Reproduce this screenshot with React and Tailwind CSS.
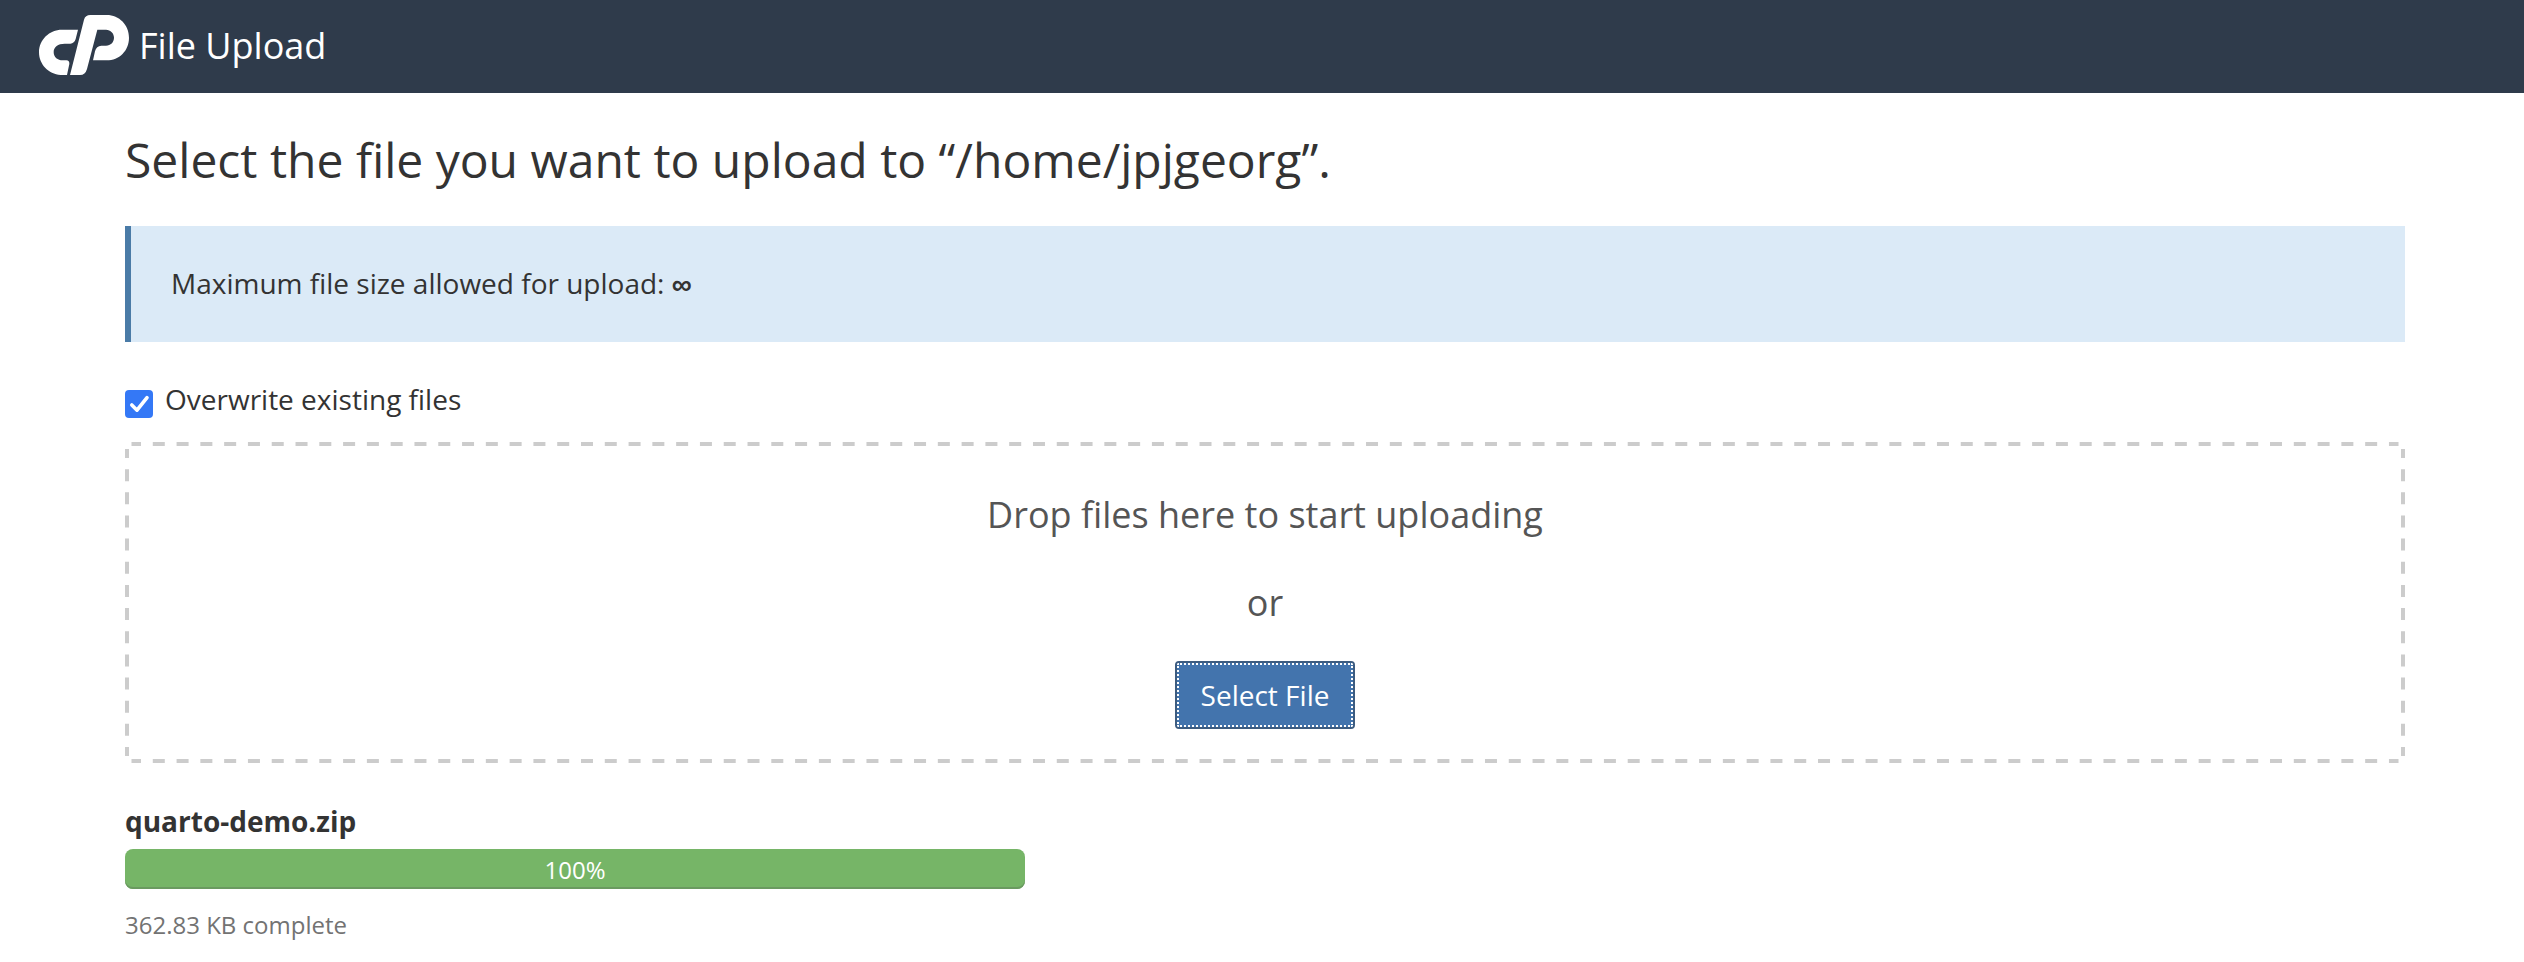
function Logo() {
  return (
    <svg className="h-[62px] w-[92px] shrink-0" viewBox="24 27 276 186" fill="#fff" aria-label="cPanel">
      <path d="M144 74 L137 102 Q133 115 121 116 H104 C84 116 71 126 71 141 C71 157 83 166 98 166 H109 Q119 167 118 177 L111 210 H92 C55 207 27 178 27 142 C27 104 58 74 96 74 Z" />
      <path d="M120 210 L162 44 Q166 30 181 30 H230 C268 30 297 60 297 98 C297 137 268 166 230 166 H189 L195 139 Q199 123 214 122 H228 C242 122 252 111 252 98 C252 85 242 74 228 74 H202 L171 192 Q166 210 150 210 Z" />
    </svg>
  );
}

// Dashed outline of the drop area: the corners are left open.
function DashedOutline() {
  return (
    <svg
      className="pointer-events-none absolute left-0 top-0 h-[321px] w-[2280px]"
      viewBox="0 0 2280 321"
      fill="none"
      stroke="#ccc"
      strokeWidth="4"
    >
      <g strokeDasharray="12 11.789" strokeDashoffset="2.5">
        <path d="M6.5 2 H2273.5" />
        <path d="M6.5 319 H2273.5" />
      </g>
      <g strokeDasharray="12 11.154" strokeDashoffset="3">
        <path d="M2 7 V314" />
        <path d="M2278 7 V314" />
      </g>
    </svg>
  );
}

export default function App() {
  return (
    <div className="min-h-[962px] bg-white font-['Open_Sans',sans-serif] text-[28px] leading-[40px] text-[#333]">
      <header className="flex h-[93px] items-start bg-[#2f3b4b] pl-[38px] pt-[14px]">
        <Logo />
        <span className="ml-[9px] mt-[7px] text-[36px] leading-[50px] text-white">File Upload</span>
      </header>

      <main className="ml-[125px] w-[2280px] pt-[37px]">
        <h1 className="h-[96px] whitespace-nowrap text-[48px] leading-[60px]">
          Select the file you want to upload to “/home/jpjgeorg”.
        </h1>

        <div className="flex h-[116px] items-center border-l-[6px] border-[#4a7ba7] bg-[#dbeaf7] pb-[2px] pl-[40px]">
          <p>
            Maximum file size allowed for upload:{" "}
            <strong className="font-['Liberation_Sans',sans-serif] leading-none">∞</strong>
          </p>
        </div>

        <label className="mt-[37px] flex h-[63px] items-start">
          <span className="mt-[11px] flex size-7 items-center justify-center rounded-[4px] bg-[#3478f6]">
            <svg className="size-7" viewBox="0 0 28 28" fill="none" stroke="#fff" strokeWidth="3.6" strokeLinecap="round" strokeLinejoin="round">
              <path d="M6.8 15 L12 20.2 L22 7.6" />
            </svg>
          </span>
          <span className="ml-[12px]">Overwrite existing files</span>
        </label>

        <section className="relative flex h-[321px] flex-col items-center pt-[48px] text-[36px] leading-[50px] text-[#555]">
          <DashedOutline />
          <p>Drop files here to start uploading</p>
          <p className="mt-[38px]">or</p>
          <button className="mt-[33px] flex h-[68px] w-[180px] items-center justify-center rounded-[4px] border-2 border-[#3d5c80] bg-[#4374ad] text-[28px] leading-[40px] text-white outline-2 -outline-offset-4 outline-dotted outline-white">
            Select File
          </button>
        </section>

        <section className="w-[900px] pt-[38px]">
          <h2 className="h-[48px] font-bold">quarto-demo.zip</h2>
          <div className="h-[40px] rounded-[8px] bg-[#76b567] text-center text-[24px] leading-[42px] text-white shadow-[inset_0_-2px_0_#6a9a60]">
            100%
          </div>
          <p className="mt-[19px] text-[24px] leading-[34px] text-[#737373]">362.83 KB complete</p>
        </section>
      </main>
    </div>
  );
}
